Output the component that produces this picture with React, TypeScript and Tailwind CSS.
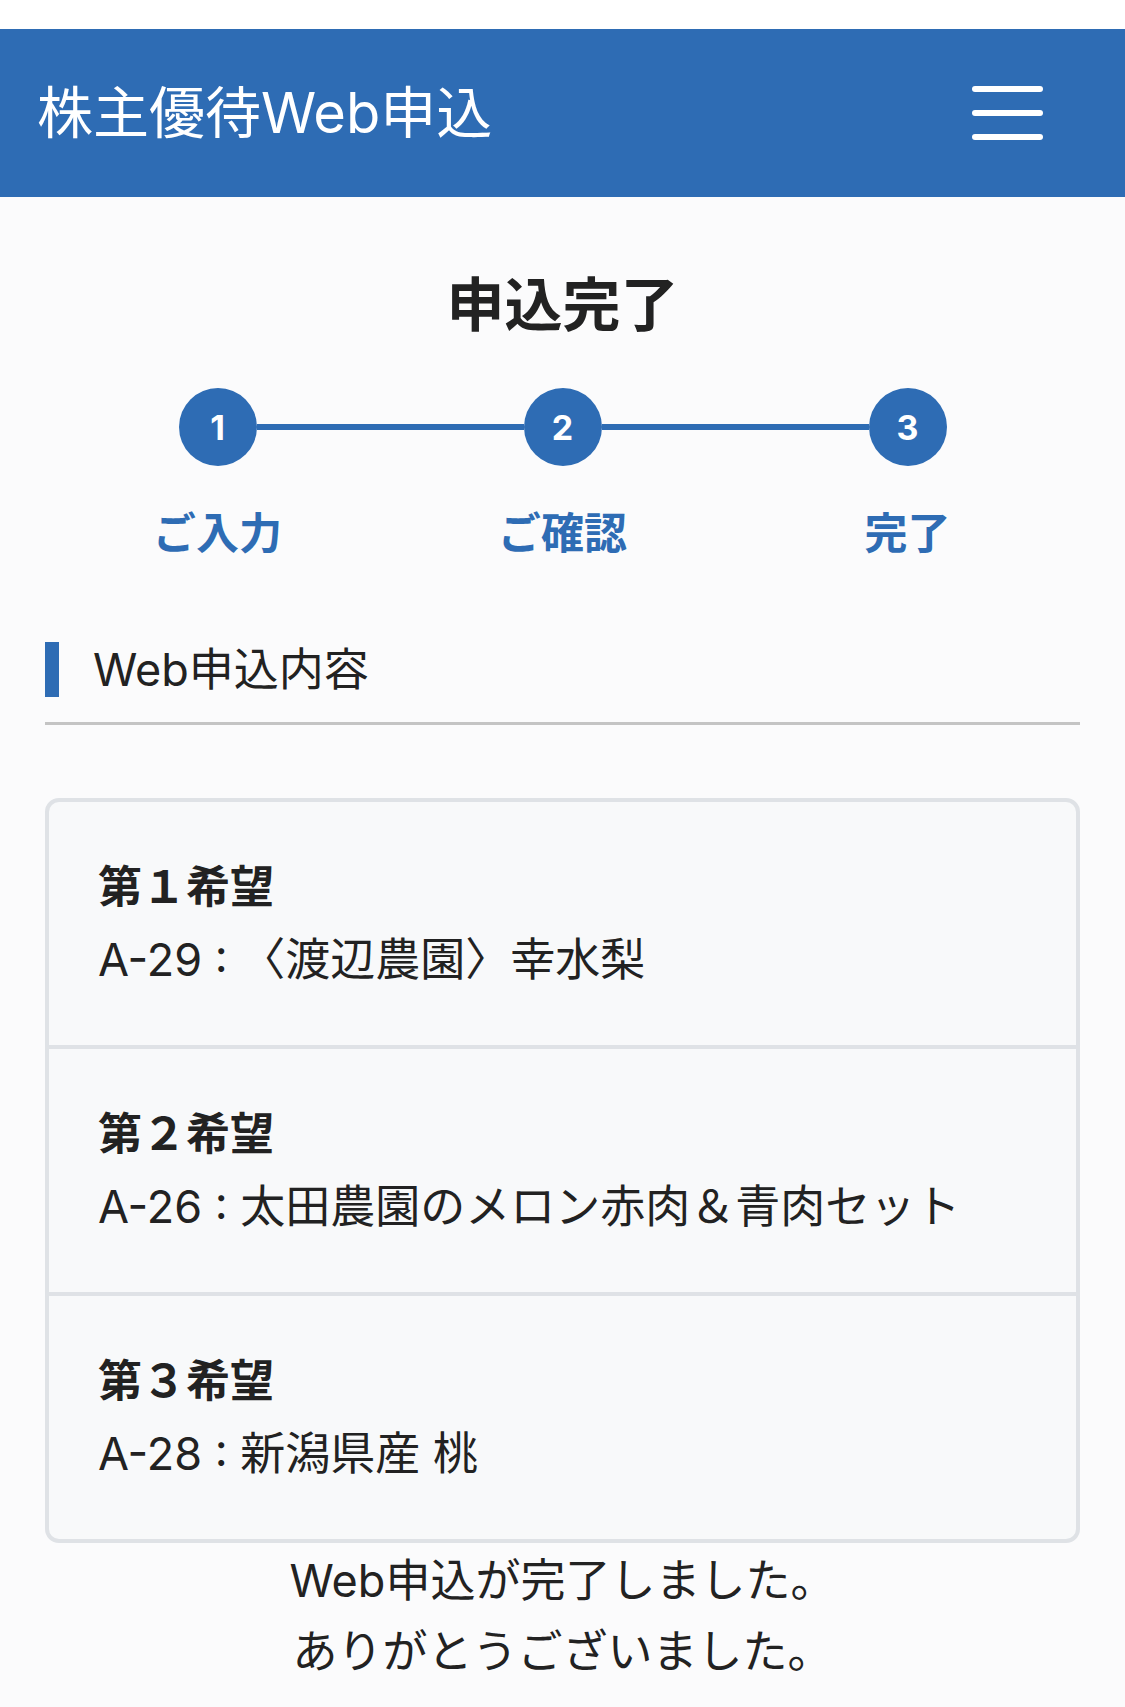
const steps = [
  { no: 1, label: 'ご入力' },
  { no: 2, label: 'ご確認' },
  { no: 3, label: '完了' },
];

const wishes = [
  { title: '第１希望', item: 'A-29 : 〈渡辺農園〉幸水梨' },
  { title: '第２希望', item: 'A-26 : 太田農園のメロン赤肉＆青肉セット' },
  { title: '第３希望', item: 'A-28 : 新潟県産 桃' },
];

const App = () => {
  return (
    <div
      className="min-h-[1707px] bg-[#fbfbfc] text-[#222529]"
      style={{ fontFamily: 'Inter, "Noto Sans CJK JP", sans-serif' }}
    >
      <div className="h-[29px] bg-white" />

      <header className="h-[168px] bg-[#2e6cb4] flex items-center justify-between pl-[37px] pr-[82px]">
        <h1 className="text-white text-[56px] font-normal leading-none">株主優待Web申込</h1>
        <button className="flex flex-col gap-[18px] w-[71px]">
          <span className="block h-[6px] w-full rounded-full bg-white" />
          <span className="block h-[6px] w-full rounded-full bg-white" />
          <span className="block h-[6px] w-full rounded-full bg-white" />
        </button>
      </header>

      <main className="px-[45px]">
        <h2 className="mt-[66px] text-center text-[58px] font-bold leading-[84px] text-[#222]">申込完了</h2>

        <div className="mt-[41px] grid grid-cols-3">
          {steps.map((s, i) => (
            <div key={s.no} className="flex flex-col items-center">
              <div className="flex w-full items-center">
                <div className={`h-[6px] flex-1 ${i === 0 ? 'bg-transparent' : 'bg-[#2e6cb4]'}`} />
                <div className="flex h-[78px] w-[78px] items-center justify-center rounded-full bg-[#2e6cb4] text-[34px] font-bold text-white">
                  {s.no}
                </div>
                <div className={`h-[6px] flex-1 ${i === steps.length - 1 ? 'bg-transparent' : 'bg-[#2e6cb4]'}`} />
              </div>
              <div className="mt-[36px] text-[43px] font-bold leading-[63px] text-[#2e6cb4]">{s.label}</div>
            </div>
          ))}
        </div>

        <div className="mt-[77px] flex items-center">
          <div className="h-[55px] w-[14px] bg-[#2e6cb4]" />
          <h3 className="ml-[34px] text-[45px] font-normal leading-[55px] text-[#222]">Web申込内容</h3>
        </div>
        <div className="mt-[25px] h-[3px] bg-[#c4c4c4]" />

        <div className="mt-[73px] overflow-hidden rounded-[14px] border-[4px] border-[#dfe2e6] bg-[#f8f9fa]">
          {wishes.map((w, i) => (
            <div
              key={w.title}
              className={`px-[49px] py-[54px] ${i > 0 ? 'border-t-[4px] border-[#dfe2e6]' : ''}`}
            >
              <div className="text-[44px] font-bold leading-[63px] text-[#222]">{w.title}</div>
              <div className="mt-[9px] text-[45px] leading-[63px] text-[#222]">{w.item}</div>
            </div>
          ))}
        </div>

        <div className="mt-[2px] text-center text-[45px] leading-[71px] text-[#222]">
          <p>Web申込が完了しました。</p>
          <p>ありがとうございました。</p>
        </div>
      </main>
    </div>
  );
};

export default App;
